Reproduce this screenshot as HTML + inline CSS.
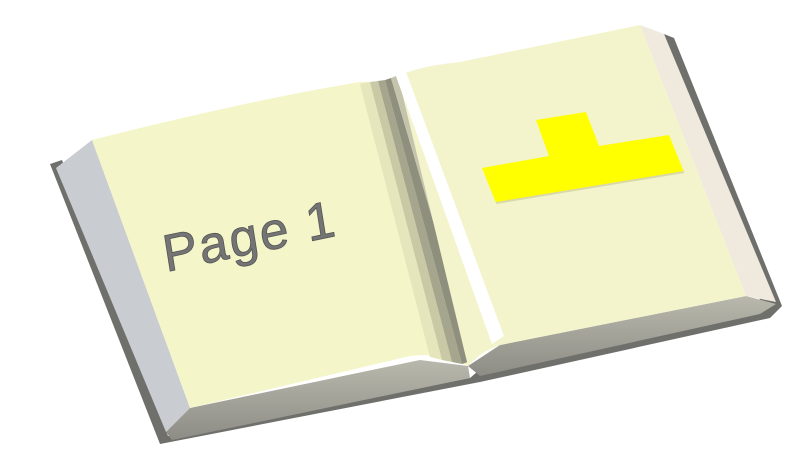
<!DOCTYPE html>
<html><head><style>html,body{margin:0;padding:0;background:#fff;width:796px;height:472px;overflow:hidden}</style></head>
<body>
<svg width="796" height="472" viewBox="0 0 796 472" xmlns="http://www.w3.org/2000/svg">
<defs>
<linearGradient id="bt" x1="0" y1="0" x2="0" y2="1">
<stop offset="0" stop-color="#b8b8ac"/><stop offset="1" stop-color="#8d8d86"/>
</linearGradient>
</defs>
<polygon points="50,164 62,160 168,436 470,378 500,352 760,300 664,34 674,38 782,306 770,318 480,382 160,444" fill="#6f6f6c"/>
<polygon points="56,168 92,140 190,408 166,432" fill="#c9ccd0"/>
<polygon points="166,432 190,408 420,360 468,366 470,378 172,440" fill="url(#bt)"/>
<path d="M92,140 Q250,100 360,82 Q380,80 392,92 L468,366 Q440,352 410,356 L190,408 Z" fill="#f4f5c9"/>
<!-- spine bands -->
<polygon points="360,84 370,82 442,360 430,357" fill="#e6e6bd"/>
<polygon points="370,82 378,81 452,362 442,360" fill="#c9c9a6"/>
<polygon points="378,81 385,80 462,364 452,362" fill="#a6a68e"/>
<polygon points="385,80 391,78 474,360 462,364" fill="#8f8f7e"/>
<polygon points="391,78 396,76 492,344 474,360" fill="#c4c4ad"/>
<polygon points="166,432 190,408 410,356" fill="none"/>
<polygon points="468,366 500,345 746,296 776,304 760,314 480,376" fill="url(#bt)"/>
<polygon points="640,25 664,34 776,302 746,296" fill="#efeadd"/>
<path d="M398,76 Q420,66 460,62 L640,25 L746,296 L500,345 Q480,352 468,366 Z" fill="#f3f4cc"/>
<polygon points="396,76 406,72 504,336 492,344" fill="#ffffff"/>
<polygon points="536,120 586,112 599,146 669,135 684,172 496,203 482,168 549,156" fill="#ffff00"/>
<polyline points="684,172 496,203" stroke="#d8d8a8" stroke-width="2" fill="none"/>
<text x="0" y="0" transform="translate(166,272) rotate(-12) skewX(-3)" font-family="'Liberation Sans',sans-serif" font-size="52" fill="#747474" stroke="#555" stroke-width="0.8" letter-spacing="2">Page 1</text>
</svg>
</body></html>
